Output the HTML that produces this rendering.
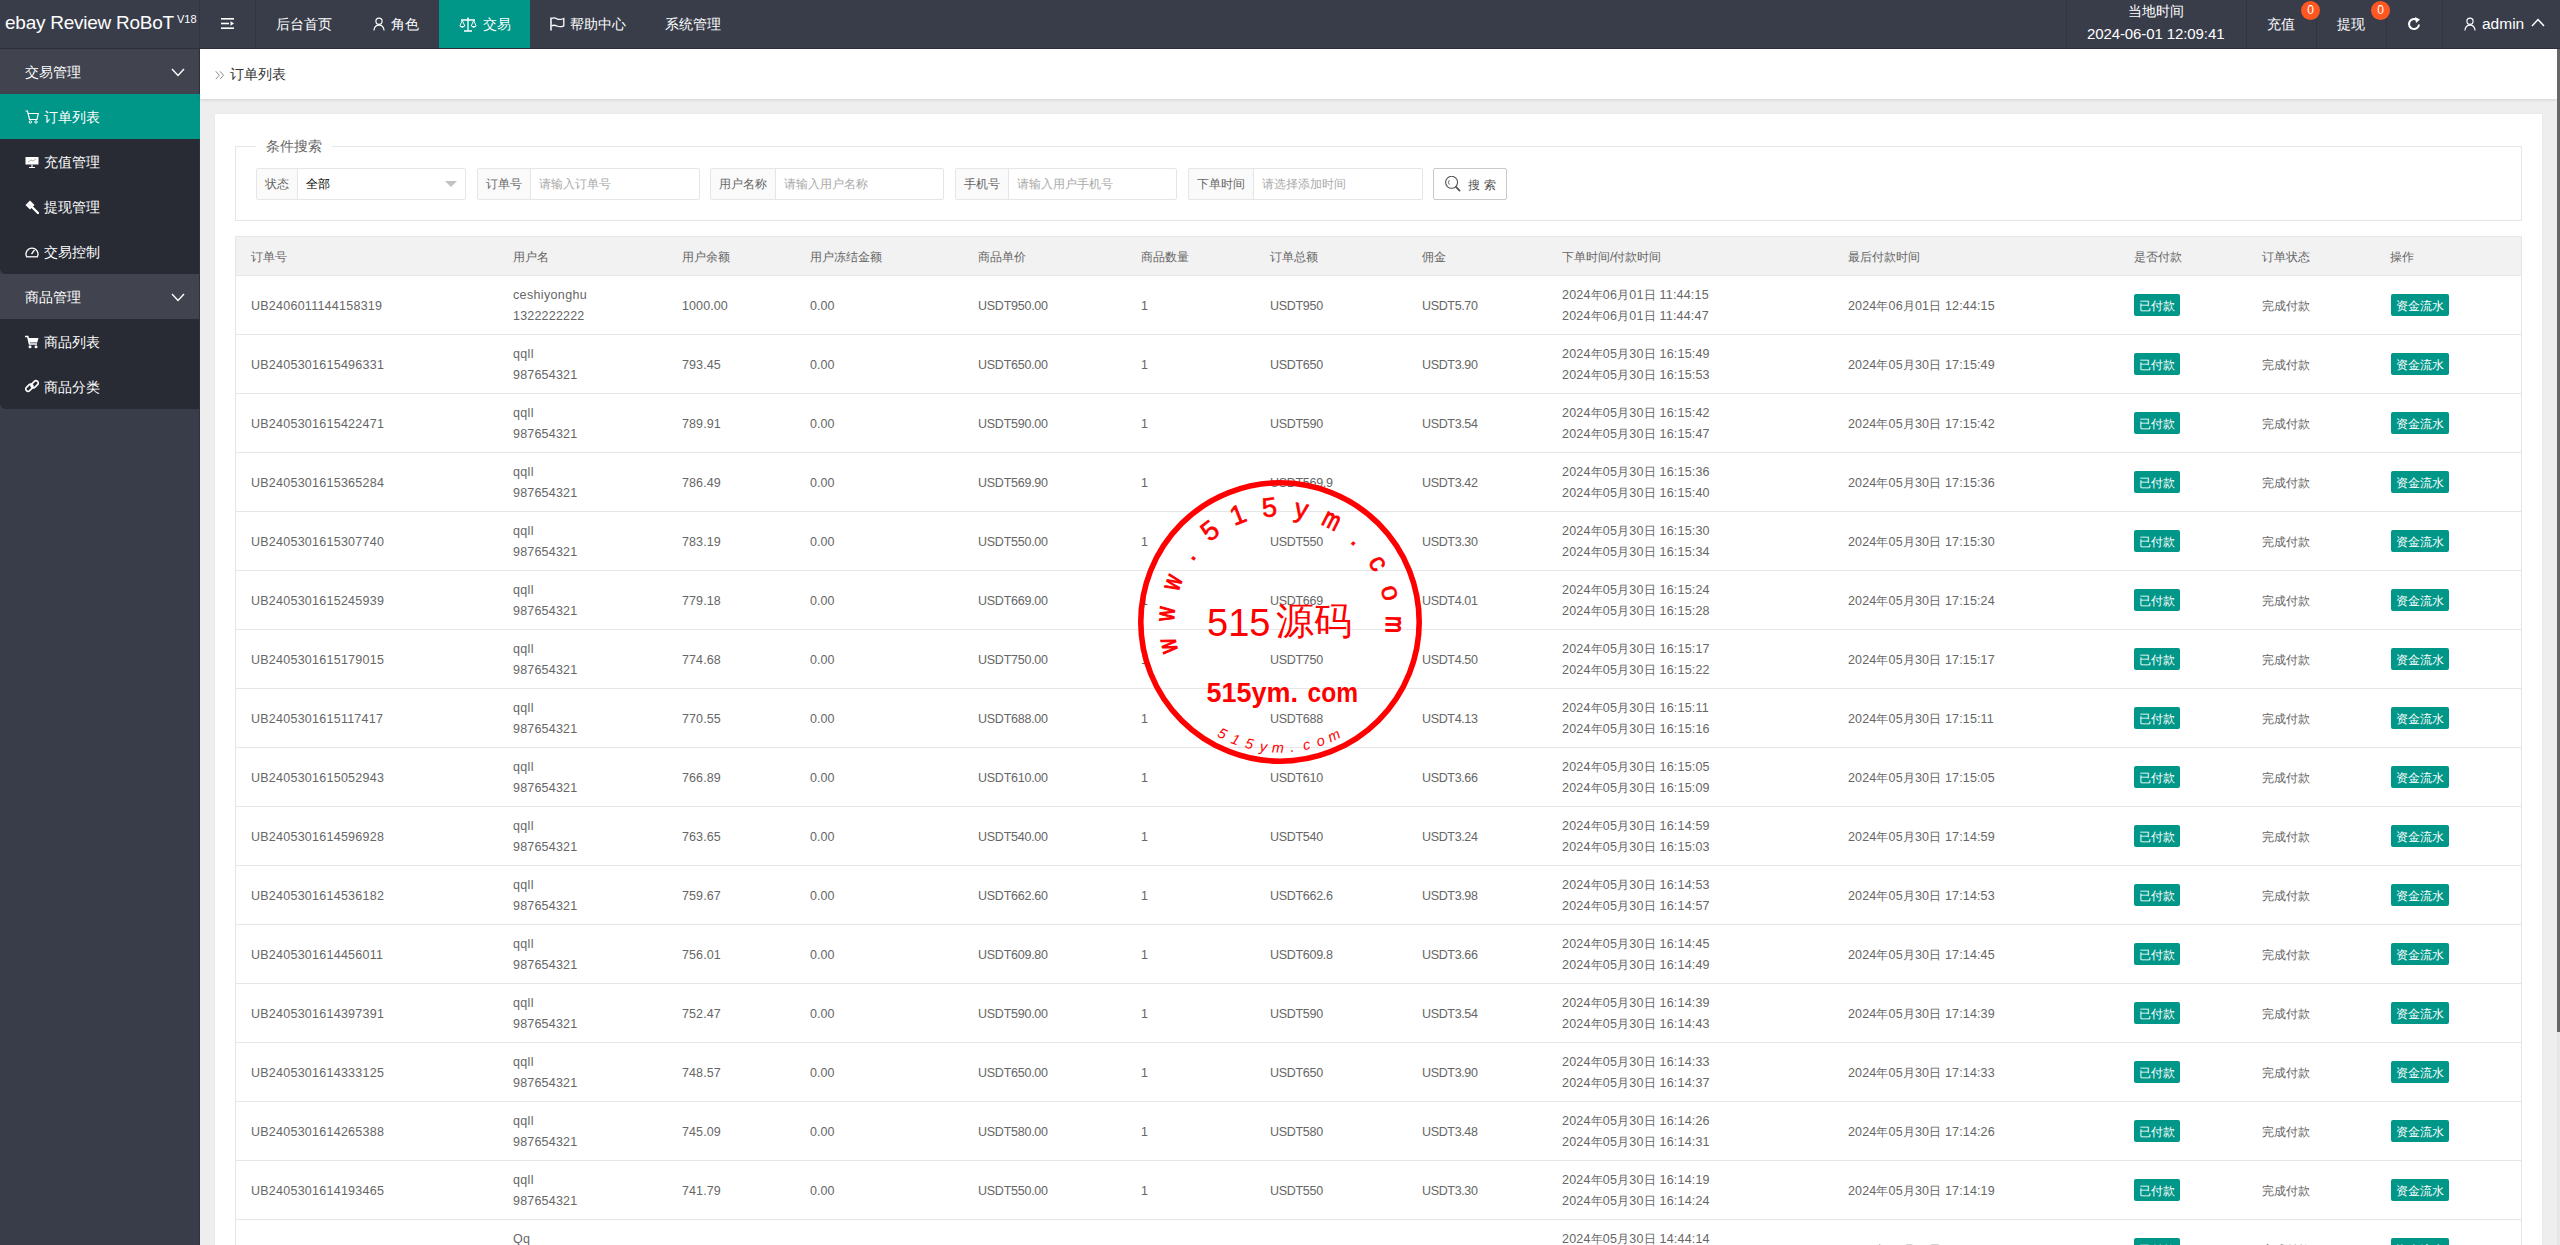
<!DOCTYPE html>
<html><head><meta charset="utf-8"><title>订单列表</title>
<style>
*{box-sizing:border-box}
html,body{margin:0;padding:0}
body{width:2560px;height:1245px;overflow:hidden;position:relative;background:#eeeeee;font-family:"Liberation Sans",sans-serif;color:#666;font-size:13px}
.hdr{position:absolute;left:0;top:0;width:2560px;height:49px;background:#393d4a;border-bottom:1px solid #2c2f3a}
.hdr .t{position:absolute;color:#fff;font-size:14px;line-height:20px;white-space:nowrap}
.vl{position:absolute;top:0;width:1px;height:48px;background:#32353f}
.logo{position:absolute;left:5px;top:10px;color:#fff;font-size:19px;line-height:26px;white-space:nowrap;letter-spacing:-0.25px}
.logo sup{font-size:11px;position:absolute;left:172px;top:4px;line-height:11px;letter-spacing:0}
.act{position:absolute;left:439px;top:0;width:91px;height:48px;background:#009688}
.badge{position:absolute;top:1px;width:19px;height:19px;border-radius:50%;background:#ff5722;color:#fff;font-size:12px;line-height:19px;text-align:center}
.side{position:absolute;left:0;top:49px;width:199px;height:1196px;background:#393d4a}
.sideline{position:absolute;left:199px;top:49px;width:1px;height:1196px;background:#30333d}
.si{position:absolute;left:0;width:199px;height:45px;color:#fff;font-size:14px;line-height:45px;white-space:nowrap}
.si .tx{position:absolute;left:44px;top:1px}
.si .ic{position:absolute;left:25px;top:16px;width:14px;height:14px}
.pi{background:#41444f}
.grp{position:absolute;left:0;width:199px;background:#282b34;border-radius:0 0 0 6px}
.si.on{background:#009688;width:200px}
.chev{position:absolute;left:172px;top:18px}
.crumb{position:absolute;left:200px;top:49px;width:2357px;height:50px;background:#fff;box-shadow:0 1px 3px rgba(0,0,0,.12)}
.crumb .t{position:absolute;left:230px;top:15px;font-size:14px;color:#333;line-height:20px}
.scroll{position:absolute;left:2557px;top:49px;width:3px;height:1196px;background:#e6e6e6}
.thumb{position:absolute;left:2557px;top:49px;width:3px;height:983px;background:#666}
.card{position:absolute;left:215px;top:114px;width:2327px;height:1200px;background:#fff;box-shadow:0 0 2px rgba(0,0,0,.06)}
.fs{position:absolute;left:235px;top:146px;width:2287px;height:75px;border:1px solid #e6e6e6}
.legend{position:absolute;left:256px;top:136px;padding:0 10px;background:#fff;font-size:14px;color:#666;line-height:20px}
.ig{position:absolute;top:168px;height:32px;border:1px solid #e6e6e6;border-radius:2px;background:#fff}
.ig .lb{position:absolute;left:0;top:0;height:30px;background:#fafafa;border-right:1px solid #e6e6e6;color:#666;font-size:12px;line-height:30px;text-align:center}
.ig .ph{position:absolute;top:0;line-height:30px;font-size:12px;color:#aaa;white-space:nowrap}
.btn{position:absolute;left:1433px;top:168px;width:74px;height:32px;border:1px solid #c9c9c9;border-radius:2px;background:#fff;color:#555;font-size:12px;line-height:30px}
.tbl{position:absolute;left:235px;top:236px;width:2287px;height:1100px;border:1px solid #e6e6e6;border-bottom:none}
.th{position:absolute;left:236px;top:237px;width:2285px;height:39px;background:#f2f2f2;border-bottom:1px solid #e6e6e6}
.c{position:absolute;font-size:12.5px;line-height:20px;color:#666;white-space:nowrap}
.rl{position:absolute;left:236px;width:2285px;height:1px;background:#e6e6e6}
.bx{position:absolute;height:22px;background:#009688;color:#fff;font-size:12px;line-height:24px;overflow:hidden;text-align:center;border-radius:2px}
.c b{font-weight:normal;font-size:12px}
</style></head><body>

<div class="hdr"></div>
<div class="logo">ebay Review RoBoT<sup>V18</sup></div>
<div class="vl" style="left:199px"></div>
<div class="vl" style="left:255px"></div>
<div class="vl" style="left:2066px"></div>
<div class="vl" style="left:2246px"></div>
<div class="vl" style="left:2316px"></div>
<div class="vl" style="left:2386px"></div>
<div class="vl" style="left:2442px"></div>
<div class="act"></div>
<svg style="position:absolute;left:221px;top:17px" width="14" height="13" viewBox="0 0 14 13"><rect x="0" y="1" width="13" height="1.6" fill="#fff"/><rect x="0" y="5.7" width="8" height="1.6" fill="#fff"/><path d="M9.5 4.3 L13 6.5 L9.5 8.7Z" fill="#fff"/><rect x="0" y="10.4" width="13" height="1.6" fill="#fff"/></svg>
<div class="hdr-items">
<div class="t" style="position:absolute;left:276px;top:14px;color:#fff;font-size:14px;line-height:20px">后台首页</div>
<svg style="position:absolute;left:373px;top:17px" width="12" height="14" viewBox="0 0 12 14"><circle cx="6" cy="4.2" r="3.1" fill="none" stroke="#fff" stroke-width="1.15"/><path d="M0.9 13.5 C1.3 9.7 3.5 8.1 6 8.1 C8.5 8.1 10.7 9.7 11.1 13.5" fill="none" stroke="#fff" stroke-width="1.15"/></svg>
<div style="position:absolute;left:391px;top:14px;color:#fff;font-size:14px;line-height:20px">角色</div>
<svg style="position:absolute;left:459px;top:17px" width="18" height="15" viewBox="0 0 18 15"><path d="M9 1 V14 M5 14 H13 M2 3 H16" stroke="#fff" stroke-width="1.3" fill="none"/><circle cx="9" cy="1.5" r="1" fill="#fff"/><path d="M3.3 3.5 L0.8 9 M3.3 3.5 L5.8 9 M14.7 3.5 L12.2 9 M14.7 3.5 L17.2 9" stroke="#fff" stroke-width="1" fill="none"/><path d="M0.5 9 Q3.3 12.5 6.1 9Z M11.9 9 Q14.7 12.5 17.5 9Z" fill="#fff"/></svg>
<div style="position:absolute;left:483px;top:14px;color:#fff;font-size:14px;line-height:20px">交易</div>
<svg style="position:absolute;left:550px;top:17px" width="15" height="14" viewBox="0 0 15 14"><path d="M1 0.5 V13.5" stroke="#fff" stroke-width="1.5"/><path d="M1.5 1.5 Q4 0.3 7 1.8 Q10 3.2 13.8 1.5 V8.8 Q10 10.5 7 9 Q4 7.6 1.5 8.8" fill="none" stroke="#fff" stroke-width="1.3"/></svg>
<div style="position:absolute;left:570px;top:14px;color:#fff;font-size:14px;line-height:20px">帮助中心</div>
<div style="position:absolute;left:665px;top:14px;color:#fff;font-size:14px;line-height:20px">系统管理</div>
</div>
<div style="position:absolute;left:2128px;top:1px;color:#fff;font-size:14px;line-height:20px">当地时间</div>
<div style="position:absolute;left:2087px;top:24px;color:#fff;font-size:15px;line-height:20px;white-space:nowrap;letter-spacing:-0.1px">2024-06-01 12:09:41</div>
<div style="position:absolute;left:2267px;top:14px;color:#fff;font-size:14px;line-height:20px">充值</div>
<div class="badge" style="left:2301px">0</div>
<div style="position:absolute;left:2337px;top:14px;color:#fff;font-size:14px;line-height:20px">提现</div>
<div class="badge" style="left:2371px">0</div>
<svg style="position:absolute;left:2407px;top:17px" width="14" height="14" viewBox="0 0 14 14"><path d="M12 7.5 A5 5 0 1 1 9.8 2.9" fill="none" stroke="#fff" stroke-width="2"/><path d="M8 0 L13 2.5 L9 6Z" fill="#fff"/></svg>
<svg style="position:absolute;left:2464px;top:17px" width="12" height="14" viewBox="0 0 12 14"><circle cx="6" cy="4.2" r="3.1" fill="none" stroke="#fff" stroke-width="1.15"/><path d="M0.9 13.5 C1.3 9.7 3.5 8.1 6 8.1 C8.5 8.1 10.7 9.7 11.1 13.5" fill="none" stroke="#fff" stroke-width="1.15"/></svg>
<div style="position:absolute;left:2482px;top:14px;color:#fff;font-size:15.5px;line-height:20px">admin</div>
<svg style="position:absolute;left:2531px;top:18px" width="14" height="9" viewBox="0 0 14 9"><path d="M1 8 L7 1.5 L13 8" fill="none" stroke="#fff" stroke-width="1.5"/></svg>
<div class="side"></div><div class="sideline"></div>
<div class="si pi" style="top:49px"><div class="tx" style="left:25px">交易管理</div></div><svg style="position:absolute;left:171px;top:68px" width="14" height="9" viewBox="0 0 14 9"><path d="M1 1 L7 7.5 L13 1" fill="none" stroke="#fff" stroke-width="1.4"/></svg>
<div class="grp" style="top:94px;height:180px"></div>
<div class="si on" style="top:94px"><div class="tx">订单列表</div></div>
<svg style="position:absolute;left:25px;top:110px" width="14" height="14" viewBox="0 0 14 14"><path d="M0.5 1 H2.5 L4.5 9.5 H12 L13.3 3.5 H3.3" fill="none" stroke="#fff" stroke-width="1.2"/><circle cx="5.3" cy="12" r="1.2" fill="none" stroke="#fff" stroke-width="1"/><circle cx="11" cy="12" r="1.2" fill="none" stroke="#fff" stroke-width="1"/></svg>
<div class="si" style="top:139px"><div class="tx">充值管理</div></div>
<svg style="position:absolute;left:25px;top:156px" width="14" height="12" viewBox="0 0 14 12"><rect x="0.5" y="1" width="13" height="7.5" fill="#fff"/><path d="M7 8.5 V11 M4 11.5 H10" stroke="#fff" stroke-width="1.2"/><path d="M3 6 L6 4 L8 5 L11 3" stroke="#999" stroke-width="0.8" fill="none"/></svg>
<div class="si" style="top:184px"><div class="tx">提现管理</div></div>
<svg style="position:absolute;left:25px;top:200px" width="14" height="14" viewBox="0 0 14 14"><path d="M5 0.5 L9.5 5 L7 7.5 L2.5 3Z" fill="#fff"/><path d="M0.5 5 L2.5 3 L7 7.5 L5 9.5Z" fill="#fff"/><path d="M7 7 L13 13" stroke="#fff" stroke-width="2.4" stroke-linecap="round"/></svg>
<div class="si" style="top:229px"><div class="tx">交易控制</div></div>
<svg style="position:absolute;left:25px;top:245px" width="14" height="13" viewBox="0 0 14 13"><path d="M1.5 11.5 A6 6 0 1 1 12.5 11.5" fill="none" stroke="#fff" stroke-width="1.3"/><path d="M1 11.8 H13" stroke="#fff" stroke-width="1.3"/><path d="M6.5 9 L9.5 5" stroke="#fff" stroke-width="1.3"/></svg>
<div class="si pi" style="top:274px"><div class="tx" style="left:25px">商品管理</div></div><svg style="position:absolute;left:171px;top:293px" width="14" height="9" viewBox="0 0 14 9"><path d="M1 1 L7 7.5 L13 1" fill="none" stroke="#fff" stroke-width="1.4"/></svg>
<div class="grp" style="top:319px;height:90px"></div>
<div class="si" style="top:319px"><div class="tx">商品列表</div></div>
<svg style="position:absolute;left:25px;top:335px" width="14" height="14" viewBox="0 0 14 14"><path d="M0 1.5 H2.8 L4.5 9 H12" fill="none" stroke="#fff" stroke-width="1.6"/><path d="M3.3 3 H13.5 L12.3 7.5 H4.3Z" fill="#fff"/><circle cx="5" cy="11.8" r="1.5" fill="#fff"/><circle cx="11" cy="11.8" r="1.5" fill="#fff"/></svg>
<div class="si" style="top:364px"><div class="tx">商品分类</div></div>
<svg style="position:absolute;left:25px;top:379px" width="14" height="14" viewBox="0 0 14 14"><path d="M6 8 L8 6" stroke="#fff" stroke-width="1.6"/><rect x="0.3" y="6.5" width="8" height="4.5" rx="2.25" transform="rotate(-45 4.3 8.75)" fill="none" stroke="#fff" stroke-width="1.6"/><rect x="5.7" y="3" width="8" height="4.5" rx="2.25" transform="rotate(-45 9.7 5.25)" fill="none" stroke="#fff" stroke-width="1.6"/></svg>
<div class="crumb"></div>
<svg style="position:absolute;left:215px;top:70px" width="11" height="11" viewBox="0 0 11 11"><path d="M0.8 1.3 L4.3 5.2 L0.8 9.1 M5 1.3 L8.5 5.2 L5 9.1" fill="none" stroke="#8a8a8a" stroke-width="1"/></svg>
<div style="position:absolute;left:230px;top:64px;font-size:14px;line-height:20px;color:#333">订单列表</div>
<div class="scroll"></div><div class="thumb"></div>
<div class="card"></div>
<div class="fs"></div><div class="legend">条件搜索</div>
<div class="ig" style="left:256px;width:210px"><div class="lb" style="width:41px">状态</div><div class="ph" style="left:49px;color:#000">全部</div></div>
<svg style="position:absolute;left:445px;top:181px" width="12" height="7" viewBox="0 0 12 7"><path d="M0 0 H12 L6 6Z" fill="#c2c2c2"/></svg>
<div class="ig" style="left:477px;width:223px"><div class="lb" style="width:53px">订单号</div><div class="ph" style="left:61px;color:#aaa">请输入订单号</div></div>
<div class="ig" style="left:710px;width:234px"><div class="lb" style="width:65px">用户名称</div><div class="ph" style="left:73px;color:#aaa">请输入用户名称</div></div>
<div class="ig" style="left:955px;width:222px"><div class="lb" style="width:53px">手机号</div><div class="ph" style="left:61px;color:#aaa">请输入用户手机号</div></div>
<div class="ig" style="left:1188px;width:235px"><div class="lb" style="width:65px">下单时间</div><div class="ph" style="left:73px;color:#aaa">请选择添加时间</div></div>
<div class="btn"></div>
<svg style="position:absolute;left:1445px;top:176px" width="18" height="18" viewBox="0 0 18 18"><circle cx="6.6" cy="6.3" r="6" fill="none" stroke="#555" stroke-width="1.1"/><path d="M11 10.8 L14.6 14.6" stroke="#555" stroke-width="1.8" stroke-linecap="round"/><path d="M4.3 4.2 A3.6 3.6 0 0 0 4.3 8.6" fill="none" stroke="#555" stroke-width="0.9"/></svg>
<div style="position:absolute;left:1468px;top:175px;font-size:12px;line-height:20px;color:#555;letter-spacing:4px">搜索</div>
<div class="tbl"></div><div class="th"></div>
<div class="c" style="left:251px;top:247px"><b>订单号</b></div>
<div class="c" style="left:513px;top:247px"><b>用户名</b></div>
<div class="c" style="left:682px;top:247px"><b>用户余额</b></div>
<div class="c" style="left:810px;top:247px"><b>用户冻结金额</b></div>
<div class="c" style="left:978px;top:247px"><b>商品单价</b></div>
<div class="c" style="left:1141px;top:247px"><b>商品数量</b></div>
<div class="c" style="left:1270px;top:247px"><b>订单总额</b></div>
<div class="c" style="left:1422px;top:247px"><b>佣金</b></div>
<div class="c" style="left:1562px;top:247px"><b>下单时间</b>/<b>付款时间</b></div>
<div class="c" style="left:1848px;top:247px"><b>最后付款时间</b></div>
<div class="c" style="left:2134px;top:247px"><b>是否付款</b></div>
<div class="c" style="left:2262px;top:247px"><b>订单状态</b></div>
<div class="c" style="left:2390px;top:247px"><b>操作</b></div>
<div class="rl" style="top:334px"></div>
<div class="c" style="left:251px;top:296px;letter-spacing:.25px">UB2406011144158319</div>
<div class="c" style="left:513px;top:285px;letter-spacing:.35px">ceshiyonghu</div><div class="c" style="left:513px;top:306px;letter-spacing:.2px">1322222222</div>
<div class="c" style="left:682px;top:296px;letter-spacing:.1px">1000.00</div>
<div class="c" style="left:810px;top:296px;letter-spacing:0px">0.00</div>
<div class="c" style="left:978px;top:296px;letter-spacing:-.25px">USDT950.00</div>
<div class="c" style="left:1141px;top:296px">1</div>
<div class="c" style="left:1270px;top:296px;letter-spacing:-.3px">USDT950</div>
<div class="c" style="left:1422px;top:296px;letter-spacing:-.35px">USDT5.70</div>
<div class="c" style="left:1562px;top:285px;letter-spacing:.2px">2024<b>年</b>06<b>月</b>01<b>日</b> 11:44:15</div><div class="c" style="left:1562px;top:306px;letter-spacing:.2px">2024<b>年</b>06<b>月</b>01<b>日</b> 11:44:47</div>
<div class="c" style="left:1848px;top:296px;letter-spacing:.15px">2024<b>年</b>06<b>月</b>01<b>日</b> 12:44:15</div>
<div class="bx" style="left:2134px;top:294px;width:46px">已付款</div>
<div class="c" style="left:2262px;top:296px"><b>完成付款</b></div>
<div class="bx" style="left:2391px;top:294px;width:58px">资金流水</div>
<div class="rl" style="top:393px"></div>
<div class="c" style="left:251px;top:355px;letter-spacing:.25px">UB2405301615496331</div>
<div class="c" style="left:513px;top:344px;letter-spacing:.35px">qqll</div><div class="c" style="left:513px;top:365px;letter-spacing:.2px">987654321</div>
<div class="c" style="left:682px;top:355px;letter-spacing:.1px">793.45</div>
<div class="c" style="left:810px;top:355px;letter-spacing:0px">0.00</div>
<div class="c" style="left:978px;top:355px;letter-spacing:-.25px">USDT650.00</div>
<div class="c" style="left:1141px;top:355px">1</div>
<div class="c" style="left:1270px;top:355px;letter-spacing:-.3px">USDT650</div>
<div class="c" style="left:1422px;top:355px;letter-spacing:-.35px">USDT3.90</div>
<div class="c" style="left:1562px;top:344px;letter-spacing:.2px">2024<b>年</b>05<b>月</b>30<b>日</b> 16:15:49</div><div class="c" style="left:1562px;top:365px;letter-spacing:.2px">2024<b>年</b>05<b>月</b>30<b>日</b> 16:15:53</div>
<div class="c" style="left:1848px;top:355px;letter-spacing:.15px">2024<b>年</b>05<b>月</b>30<b>日</b> 17:15:49</div>
<div class="bx" style="left:2134px;top:353px;width:46px">已付款</div>
<div class="c" style="left:2262px;top:355px"><b>完成付款</b></div>
<div class="bx" style="left:2391px;top:353px;width:58px">资金流水</div>
<div class="rl" style="top:452px"></div>
<div class="c" style="left:251px;top:414px;letter-spacing:.25px">UB2405301615422471</div>
<div class="c" style="left:513px;top:403px;letter-spacing:.35px">qqll</div><div class="c" style="left:513px;top:424px;letter-spacing:.2px">987654321</div>
<div class="c" style="left:682px;top:414px;letter-spacing:.1px">789.91</div>
<div class="c" style="left:810px;top:414px;letter-spacing:0px">0.00</div>
<div class="c" style="left:978px;top:414px;letter-spacing:-.25px">USDT590.00</div>
<div class="c" style="left:1141px;top:414px">1</div>
<div class="c" style="left:1270px;top:414px;letter-spacing:-.3px">USDT590</div>
<div class="c" style="left:1422px;top:414px;letter-spacing:-.35px">USDT3.54</div>
<div class="c" style="left:1562px;top:403px;letter-spacing:.2px">2024<b>年</b>05<b>月</b>30<b>日</b> 16:15:42</div><div class="c" style="left:1562px;top:424px;letter-spacing:.2px">2024<b>年</b>05<b>月</b>30<b>日</b> 16:15:47</div>
<div class="c" style="left:1848px;top:414px;letter-spacing:.15px">2024<b>年</b>05<b>月</b>30<b>日</b> 17:15:42</div>
<div class="bx" style="left:2134px;top:412px;width:46px">已付款</div>
<div class="c" style="left:2262px;top:414px"><b>完成付款</b></div>
<div class="bx" style="left:2391px;top:412px;width:58px">资金流水</div>
<div class="rl" style="top:511px"></div>
<div class="c" style="left:251px;top:473px;letter-spacing:.25px">UB2405301615365284</div>
<div class="c" style="left:513px;top:462px;letter-spacing:.35px">qqll</div><div class="c" style="left:513px;top:483px;letter-spacing:.2px">987654321</div>
<div class="c" style="left:682px;top:473px;letter-spacing:.1px">786.49</div>
<div class="c" style="left:810px;top:473px;letter-spacing:0px">0.00</div>
<div class="c" style="left:978px;top:473px;letter-spacing:-.25px">USDT569.90</div>
<div class="c" style="left:1141px;top:473px">1</div>
<div class="c" style="left:1270px;top:473px;letter-spacing:-.3px">USDT569.9</div>
<div class="c" style="left:1422px;top:473px;letter-spacing:-.35px">USDT3.42</div>
<div class="c" style="left:1562px;top:462px;letter-spacing:.2px">2024<b>年</b>05<b>月</b>30<b>日</b> 16:15:36</div><div class="c" style="left:1562px;top:483px;letter-spacing:.2px">2024<b>年</b>05<b>月</b>30<b>日</b> 16:15:40</div>
<div class="c" style="left:1848px;top:473px;letter-spacing:.15px">2024<b>年</b>05<b>月</b>30<b>日</b> 17:15:36</div>
<div class="bx" style="left:2134px;top:471px;width:46px">已付款</div>
<div class="c" style="left:2262px;top:473px"><b>完成付款</b></div>
<div class="bx" style="left:2391px;top:471px;width:58px">资金流水</div>
<div class="rl" style="top:570px"></div>
<div class="c" style="left:251px;top:532px;letter-spacing:.25px">UB2405301615307740</div>
<div class="c" style="left:513px;top:521px;letter-spacing:.35px">qqll</div><div class="c" style="left:513px;top:542px;letter-spacing:.2px">987654321</div>
<div class="c" style="left:682px;top:532px;letter-spacing:.1px">783.19</div>
<div class="c" style="left:810px;top:532px;letter-spacing:0px">0.00</div>
<div class="c" style="left:978px;top:532px;letter-spacing:-.25px">USDT550.00</div>
<div class="c" style="left:1141px;top:532px">1</div>
<div class="c" style="left:1270px;top:532px;letter-spacing:-.3px">USDT550</div>
<div class="c" style="left:1422px;top:532px;letter-spacing:-.35px">USDT3.30</div>
<div class="c" style="left:1562px;top:521px;letter-spacing:.2px">2024<b>年</b>05<b>月</b>30<b>日</b> 16:15:30</div><div class="c" style="left:1562px;top:542px;letter-spacing:.2px">2024<b>年</b>05<b>月</b>30<b>日</b> 16:15:34</div>
<div class="c" style="left:1848px;top:532px;letter-spacing:.15px">2024<b>年</b>05<b>月</b>30<b>日</b> 17:15:30</div>
<div class="bx" style="left:2134px;top:530px;width:46px">已付款</div>
<div class="c" style="left:2262px;top:532px"><b>完成付款</b></div>
<div class="bx" style="left:2391px;top:530px;width:58px">资金流水</div>
<div class="rl" style="top:629px"></div>
<div class="c" style="left:251px;top:591px;letter-spacing:.25px">UB2405301615245939</div>
<div class="c" style="left:513px;top:580px;letter-spacing:.35px">qqll</div><div class="c" style="left:513px;top:601px;letter-spacing:.2px">987654321</div>
<div class="c" style="left:682px;top:591px;letter-spacing:.1px">779.18</div>
<div class="c" style="left:810px;top:591px;letter-spacing:0px">0.00</div>
<div class="c" style="left:978px;top:591px;letter-spacing:-.25px">USDT669.00</div>
<div class="c" style="left:1141px;top:591px">1</div>
<div class="c" style="left:1270px;top:591px;letter-spacing:-.3px">USDT669</div>
<div class="c" style="left:1422px;top:591px;letter-spacing:-.35px">USDT4.01</div>
<div class="c" style="left:1562px;top:580px;letter-spacing:.2px">2024<b>年</b>05<b>月</b>30<b>日</b> 16:15:24</div><div class="c" style="left:1562px;top:601px;letter-spacing:.2px">2024<b>年</b>05<b>月</b>30<b>日</b> 16:15:28</div>
<div class="c" style="left:1848px;top:591px;letter-spacing:.15px">2024<b>年</b>05<b>月</b>30<b>日</b> 17:15:24</div>
<div class="bx" style="left:2134px;top:589px;width:46px">已付款</div>
<div class="c" style="left:2262px;top:591px"><b>完成付款</b></div>
<div class="bx" style="left:2391px;top:589px;width:58px">资金流水</div>
<div class="rl" style="top:688px"></div>
<div class="c" style="left:251px;top:650px;letter-spacing:.25px">UB2405301615179015</div>
<div class="c" style="left:513px;top:639px;letter-spacing:.35px">qqll</div><div class="c" style="left:513px;top:660px;letter-spacing:.2px">987654321</div>
<div class="c" style="left:682px;top:650px;letter-spacing:.1px">774.68</div>
<div class="c" style="left:810px;top:650px;letter-spacing:0px">0.00</div>
<div class="c" style="left:978px;top:650px;letter-spacing:-.25px">USDT750.00</div>
<div class="c" style="left:1141px;top:650px">1</div>
<div class="c" style="left:1270px;top:650px;letter-spacing:-.3px">USDT750</div>
<div class="c" style="left:1422px;top:650px;letter-spacing:-.35px">USDT4.50</div>
<div class="c" style="left:1562px;top:639px;letter-spacing:.2px">2024<b>年</b>05<b>月</b>30<b>日</b> 16:15:17</div><div class="c" style="left:1562px;top:660px;letter-spacing:.2px">2024<b>年</b>05<b>月</b>30<b>日</b> 16:15:22</div>
<div class="c" style="left:1848px;top:650px;letter-spacing:.15px">2024<b>年</b>05<b>月</b>30<b>日</b> 17:15:17</div>
<div class="bx" style="left:2134px;top:648px;width:46px">已付款</div>
<div class="c" style="left:2262px;top:650px"><b>完成付款</b></div>
<div class="bx" style="left:2391px;top:648px;width:58px">资金流水</div>
<div class="rl" style="top:747px"></div>
<div class="c" style="left:251px;top:709px;letter-spacing:.25px">UB2405301615117417</div>
<div class="c" style="left:513px;top:698px;letter-spacing:.35px">qqll</div><div class="c" style="left:513px;top:719px;letter-spacing:.2px">987654321</div>
<div class="c" style="left:682px;top:709px;letter-spacing:.1px">770.55</div>
<div class="c" style="left:810px;top:709px;letter-spacing:0px">0.00</div>
<div class="c" style="left:978px;top:709px;letter-spacing:-.25px">USDT688.00</div>
<div class="c" style="left:1141px;top:709px">1</div>
<div class="c" style="left:1270px;top:709px;letter-spacing:-.3px">USDT688</div>
<div class="c" style="left:1422px;top:709px;letter-spacing:-.35px">USDT4.13</div>
<div class="c" style="left:1562px;top:698px;letter-spacing:.2px">2024<b>年</b>05<b>月</b>30<b>日</b> 16:15:11</div><div class="c" style="left:1562px;top:719px;letter-spacing:.2px">2024<b>年</b>05<b>月</b>30<b>日</b> 16:15:16</div>
<div class="c" style="left:1848px;top:709px;letter-spacing:.15px">2024<b>年</b>05<b>月</b>30<b>日</b> 17:15:11</div>
<div class="bx" style="left:2134px;top:707px;width:46px">已付款</div>
<div class="c" style="left:2262px;top:709px"><b>完成付款</b></div>
<div class="bx" style="left:2391px;top:707px;width:58px">资金流水</div>
<div class="rl" style="top:806px"></div>
<div class="c" style="left:251px;top:768px;letter-spacing:.25px">UB2405301615052943</div>
<div class="c" style="left:513px;top:757px;letter-spacing:.35px">qqll</div><div class="c" style="left:513px;top:778px;letter-spacing:.2px">987654321</div>
<div class="c" style="left:682px;top:768px;letter-spacing:.1px">766.89</div>
<div class="c" style="left:810px;top:768px;letter-spacing:0px">0.00</div>
<div class="c" style="left:978px;top:768px;letter-spacing:-.25px">USDT610.00</div>
<div class="c" style="left:1141px;top:768px">1</div>
<div class="c" style="left:1270px;top:768px;letter-spacing:-.3px">USDT610</div>
<div class="c" style="left:1422px;top:768px;letter-spacing:-.35px">USDT3.66</div>
<div class="c" style="left:1562px;top:757px;letter-spacing:.2px">2024<b>年</b>05<b>月</b>30<b>日</b> 16:15:05</div><div class="c" style="left:1562px;top:778px;letter-spacing:.2px">2024<b>年</b>05<b>月</b>30<b>日</b> 16:15:09</div>
<div class="c" style="left:1848px;top:768px;letter-spacing:.15px">2024<b>年</b>05<b>月</b>30<b>日</b> 17:15:05</div>
<div class="bx" style="left:2134px;top:766px;width:46px">已付款</div>
<div class="c" style="left:2262px;top:768px"><b>完成付款</b></div>
<div class="bx" style="left:2391px;top:766px;width:58px">资金流水</div>
<div class="rl" style="top:865px"></div>
<div class="c" style="left:251px;top:827px;letter-spacing:.25px">UB2405301614596928</div>
<div class="c" style="left:513px;top:816px;letter-spacing:.35px">qqll</div><div class="c" style="left:513px;top:837px;letter-spacing:.2px">987654321</div>
<div class="c" style="left:682px;top:827px;letter-spacing:.1px">763.65</div>
<div class="c" style="left:810px;top:827px;letter-spacing:0px">0.00</div>
<div class="c" style="left:978px;top:827px;letter-spacing:-.25px">USDT540.00</div>
<div class="c" style="left:1141px;top:827px">1</div>
<div class="c" style="left:1270px;top:827px;letter-spacing:-.3px">USDT540</div>
<div class="c" style="left:1422px;top:827px;letter-spacing:-.35px">USDT3.24</div>
<div class="c" style="left:1562px;top:816px;letter-spacing:.2px">2024<b>年</b>05<b>月</b>30<b>日</b> 16:14:59</div><div class="c" style="left:1562px;top:837px;letter-spacing:.2px">2024<b>年</b>05<b>月</b>30<b>日</b> 16:15:03</div>
<div class="c" style="left:1848px;top:827px;letter-spacing:.15px">2024<b>年</b>05<b>月</b>30<b>日</b> 17:14:59</div>
<div class="bx" style="left:2134px;top:825px;width:46px">已付款</div>
<div class="c" style="left:2262px;top:827px"><b>完成付款</b></div>
<div class="bx" style="left:2391px;top:825px;width:58px">资金流水</div>
<div class="rl" style="top:924px"></div>
<div class="c" style="left:251px;top:886px;letter-spacing:.25px">UB2405301614536182</div>
<div class="c" style="left:513px;top:875px;letter-spacing:.35px">qqll</div><div class="c" style="left:513px;top:896px;letter-spacing:.2px">987654321</div>
<div class="c" style="left:682px;top:886px;letter-spacing:.1px">759.67</div>
<div class="c" style="left:810px;top:886px;letter-spacing:0px">0.00</div>
<div class="c" style="left:978px;top:886px;letter-spacing:-.25px">USDT662.60</div>
<div class="c" style="left:1141px;top:886px">1</div>
<div class="c" style="left:1270px;top:886px;letter-spacing:-.3px">USDT662.6</div>
<div class="c" style="left:1422px;top:886px;letter-spacing:-.35px">USDT3.98</div>
<div class="c" style="left:1562px;top:875px;letter-spacing:.2px">2024<b>年</b>05<b>月</b>30<b>日</b> 16:14:53</div><div class="c" style="left:1562px;top:896px;letter-spacing:.2px">2024<b>年</b>05<b>月</b>30<b>日</b> 16:14:57</div>
<div class="c" style="left:1848px;top:886px;letter-spacing:.15px">2024<b>年</b>05<b>月</b>30<b>日</b> 17:14:53</div>
<div class="bx" style="left:2134px;top:884px;width:46px">已付款</div>
<div class="c" style="left:2262px;top:886px"><b>完成付款</b></div>
<div class="bx" style="left:2391px;top:884px;width:58px">资金流水</div>
<div class="rl" style="top:983px"></div>
<div class="c" style="left:251px;top:945px;letter-spacing:.25px">UB2405301614456011</div>
<div class="c" style="left:513px;top:934px;letter-spacing:.35px">qqll</div><div class="c" style="left:513px;top:955px;letter-spacing:.2px">987654321</div>
<div class="c" style="left:682px;top:945px;letter-spacing:.1px">756.01</div>
<div class="c" style="left:810px;top:945px;letter-spacing:0px">0.00</div>
<div class="c" style="left:978px;top:945px;letter-spacing:-.25px">USDT609.80</div>
<div class="c" style="left:1141px;top:945px">1</div>
<div class="c" style="left:1270px;top:945px;letter-spacing:-.3px">USDT609.8</div>
<div class="c" style="left:1422px;top:945px;letter-spacing:-.35px">USDT3.66</div>
<div class="c" style="left:1562px;top:934px;letter-spacing:.2px">2024<b>年</b>05<b>月</b>30<b>日</b> 16:14:45</div><div class="c" style="left:1562px;top:955px;letter-spacing:.2px">2024<b>年</b>05<b>月</b>30<b>日</b> 16:14:49</div>
<div class="c" style="left:1848px;top:945px;letter-spacing:.15px">2024<b>年</b>05<b>月</b>30<b>日</b> 17:14:45</div>
<div class="bx" style="left:2134px;top:943px;width:46px">已付款</div>
<div class="c" style="left:2262px;top:945px"><b>完成付款</b></div>
<div class="bx" style="left:2391px;top:943px;width:58px">资金流水</div>
<div class="rl" style="top:1042px"></div>
<div class="c" style="left:251px;top:1004px;letter-spacing:.25px">UB2405301614397391</div>
<div class="c" style="left:513px;top:993px;letter-spacing:.35px">qqll</div><div class="c" style="left:513px;top:1014px;letter-spacing:.2px">987654321</div>
<div class="c" style="left:682px;top:1004px;letter-spacing:.1px">752.47</div>
<div class="c" style="left:810px;top:1004px;letter-spacing:0px">0.00</div>
<div class="c" style="left:978px;top:1004px;letter-spacing:-.25px">USDT590.00</div>
<div class="c" style="left:1141px;top:1004px">1</div>
<div class="c" style="left:1270px;top:1004px;letter-spacing:-.3px">USDT590</div>
<div class="c" style="left:1422px;top:1004px;letter-spacing:-.35px">USDT3.54</div>
<div class="c" style="left:1562px;top:993px;letter-spacing:.2px">2024<b>年</b>05<b>月</b>30<b>日</b> 16:14:39</div><div class="c" style="left:1562px;top:1014px;letter-spacing:.2px">2024<b>年</b>05<b>月</b>30<b>日</b> 16:14:43</div>
<div class="c" style="left:1848px;top:1004px;letter-spacing:.15px">2024<b>年</b>05<b>月</b>30<b>日</b> 17:14:39</div>
<div class="bx" style="left:2134px;top:1002px;width:46px">已付款</div>
<div class="c" style="left:2262px;top:1004px"><b>完成付款</b></div>
<div class="bx" style="left:2391px;top:1002px;width:58px">资金流水</div>
<div class="rl" style="top:1101px"></div>
<div class="c" style="left:251px;top:1063px;letter-spacing:.25px">UB2405301614333125</div>
<div class="c" style="left:513px;top:1052px;letter-spacing:.35px">qqll</div><div class="c" style="left:513px;top:1073px;letter-spacing:.2px">987654321</div>
<div class="c" style="left:682px;top:1063px;letter-spacing:.1px">748.57</div>
<div class="c" style="left:810px;top:1063px;letter-spacing:0px">0.00</div>
<div class="c" style="left:978px;top:1063px;letter-spacing:-.25px">USDT650.00</div>
<div class="c" style="left:1141px;top:1063px">1</div>
<div class="c" style="left:1270px;top:1063px;letter-spacing:-.3px">USDT650</div>
<div class="c" style="left:1422px;top:1063px;letter-spacing:-.35px">USDT3.90</div>
<div class="c" style="left:1562px;top:1052px;letter-spacing:.2px">2024<b>年</b>05<b>月</b>30<b>日</b> 16:14:33</div><div class="c" style="left:1562px;top:1073px;letter-spacing:.2px">2024<b>年</b>05<b>月</b>30<b>日</b> 16:14:37</div>
<div class="c" style="left:1848px;top:1063px;letter-spacing:.15px">2024<b>年</b>05<b>月</b>30<b>日</b> 17:14:33</div>
<div class="bx" style="left:2134px;top:1061px;width:46px">已付款</div>
<div class="c" style="left:2262px;top:1063px"><b>完成付款</b></div>
<div class="bx" style="left:2391px;top:1061px;width:58px">资金流水</div>
<div class="rl" style="top:1160px"></div>
<div class="c" style="left:251px;top:1122px;letter-spacing:.25px">UB2405301614265388</div>
<div class="c" style="left:513px;top:1111px;letter-spacing:.35px">qqll</div><div class="c" style="left:513px;top:1132px;letter-spacing:.2px">987654321</div>
<div class="c" style="left:682px;top:1122px;letter-spacing:.1px">745.09</div>
<div class="c" style="left:810px;top:1122px;letter-spacing:0px">0.00</div>
<div class="c" style="left:978px;top:1122px;letter-spacing:-.25px">USDT580.00</div>
<div class="c" style="left:1141px;top:1122px">1</div>
<div class="c" style="left:1270px;top:1122px;letter-spacing:-.3px">USDT580</div>
<div class="c" style="left:1422px;top:1122px;letter-spacing:-.35px">USDT3.48</div>
<div class="c" style="left:1562px;top:1111px;letter-spacing:.2px">2024<b>年</b>05<b>月</b>30<b>日</b> 16:14:26</div><div class="c" style="left:1562px;top:1132px;letter-spacing:.2px">2024<b>年</b>05<b>月</b>30<b>日</b> 16:14:31</div>
<div class="c" style="left:1848px;top:1122px;letter-spacing:.15px">2024<b>年</b>05<b>月</b>30<b>日</b> 17:14:26</div>
<div class="bx" style="left:2134px;top:1120px;width:46px">已付款</div>
<div class="c" style="left:2262px;top:1122px"><b>完成付款</b></div>
<div class="bx" style="left:2391px;top:1120px;width:58px">资金流水</div>
<div class="rl" style="top:1219px"></div>
<div class="c" style="left:251px;top:1181px;letter-spacing:.25px">UB2405301614193465</div>
<div class="c" style="left:513px;top:1170px;letter-spacing:.35px">qqll</div><div class="c" style="left:513px;top:1191px;letter-spacing:.2px">987654321</div>
<div class="c" style="left:682px;top:1181px;letter-spacing:.1px">741.79</div>
<div class="c" style="left:810px;top:1181px;letter-spacing:0px">0.00</div>
<div class="c" style="left:978px;top:1181px;letter-spacing:-.25px">USDT550.00</div>
<div class="c" style="left:1141px;top:1181px">1</div>
<div class="c" style="left:1270px;top:1181px;letter-spacing:-.3px">USDT550</div>
<div class="c" style="left:1422px;top:1181px;letter-spacing:-.35px">USDT3.30</div>
<div class="c" style="left:1562px;top:1170px;letter-spacing:.2px">2024<b>年</b>05<b>月</b>30<b>日</b> 16:14:19</div><div class="c" style="left:1562px;top:1191px;letter-spacing:.2px">2024<b>年</b>05<b>月</b>30<b>日</b> 16:14:24</div>
<div class="c" style="left:1848px;top:1181px;letter-spacing:.15px">2024<b>年</b>05<b>月</b>30<b>日</b> 17:14:19</div>
<div class="bx" style="left:2134px;top:1179px;width:46px">已付款</div>
<div class="c" style="left:2262px;top:1181px"><b>完成付款</b></div>
<div class="bx" style="left:2391px;top:1179px;width:58px">资金流水</div>
<div class="rl" style="top:1278px"></div>
<div class="c" style="left:251px;top:1240px;letter-spacing:.25px">UB2405301444146631</div>
<div class="c" style="left:513px;top:1229px;letter-spacing:.35px">Qq</div><div class="c" style="left:513px;top:1250px;letter-spacing:.2px">987654321</div>
<div class="c" style="left:682px;top:1240px;letter-spacing:.1px">738.29</div>
<div class="c" style="left:810px;top:1240px;letter-spacing:0px">0.00</div>
<div class="c" style="left:978px;top:1240px;letter-spacing:-.25px">USDT500.00</div>
<div class="c" style="left:1141px;top:1240px">1</div>
<div class="c" style="left:1270px;top:1240px;letter-spacing:-.3px">USDT500</div>
<div class="c" style="left:1422px;top:1240px;letter-spacing:-.35px">USDT3.00</div>
<div class="c" style="left:1562px;top:1229px;letter-spacing:.2px">2024<b>年</b>05<b>月</b>30<b>日</b> 14:44:14</div><div class="c" style="left:1562px;top:1250px;letter-spacing:.2px">2024<b>年</b>05<b>月</b>30<b>日</b> 14:44:20</div>
<div class="c" style="left:1848px;top:1240px;letter-spacing:.15px">2024<b>年</b>05<b>月</b>30<b>日</b> 15:44:14</div>
<div class="bx" style="left:2134px;top:1238px;width:46px">已付款</div>
<div class="c" style="left:2262px;top:1240px"><b>完成付款</b></div>
<div class="bx" style="left:2391px;top:1238px;width:58px">资金流水</div>
<svg style="position:absolute;left:1130px;top:472px" width="300" height="300" viewBox="0 0 300 300"><circle cx="150" cy="150" r="139.2" fill="none" stroke="#f00" stroke-width="5.6"/><text transform="translate(150 150) rotate(-102.00) translate(0 -106) scale(0.72 1)" text-anchor="middle" font-family="Liberation Sans" font-size="27" fill="#f00" stroke="#f00" stroke-width="1.3">w</text><text transform="translate(150 150) rotate(-85.89) translate(0 -106) scale(0.72 1)" text-anchor="middle" font-family="Liberation Sans" font-size="27" fill="#f00" stroke="#f00" stroke-width="1.3">w</text><text transform="translate(150 150) rotate(-69.78) translate(0 -106) scale(0.72 1)" text-anchor="middle" font-family="Liberation Sans" font-size="27" fill="#f00" stroke="#f00" stroke-width="1.3">w</text><text transform="translate(150 150) rotate(-53.67) translate(0 -106) scale(1.0 1)" text-anchor="middle" font-family="Liberation Sans" font-size="27" fill="#f00" stroke="#f00" stroke-width="0.6">.</text><text transform="translate(150 150) rotate(-37.57) translate(0 -106) scale(1.0 1)" text-anchor="middle" font-family="Liberation Sans" font-size="27" fill="#f00" stroke="#f00" stroke-width="0.6">5</text><text transform="translate(150 150) rotate(-21.46) translate(0 -106) scale(1.0 1)" text-anchor="middle" font-family="Liberation Sans" font-size="27" fill="#f00" stroke="#f00" stroke-width="0.6">1</text><text transform="translate(150 150) rotate(-5.35) translate(0 -106) scale(1.0 1)" text-anchor="middle" font-family="Liberation Sans" font-size="27" fill="#f00" stroke="#f00" stroke-width="0.6">5</text><text transform="translate(150 150) rotate(10.76) translate(0 -106) scale(1.0 1)" text-anchor="middle" font-family="Liberation Sans" font-size="27" fill="#f00" stroke="#f00" stroke-width="0.6">y</text><text transform="translate(150 150) rotate(26.87) translate(0 -106) scale(0.74 1)" text-anchor="middle" font-family="Liberation Sans" font-size="27" fill="#f00" stroke="#f00" stroke-width="1.2">m</text><text transform="translate(150 150) rotate(42.97) translate(0 -106) scale(1.0 1)" text-anchor="middle" font-family="Liberation Sans" font-size="27" fill="#f00" stroke="#f00" stroke-width="0.6">.</text><text transform="translate(150 150) rotate(59.08) translate(0 -106) scale(1.0 1)" text-anchor="middle" font-family="Liberation Sans" font-size="27" fill="#f00" stroke="#f00" stroke-width="0.6">c</text><text transform="translate(150 150) rotate(75.19) translate(0 -106) scale(1.0 1)" text-anchor="middle" font-family="Liberation Sans" font-size="27" fill="#f00" stroke="#f00" stroke-width="0.6">o</text><text transform="translate(150 150) rotate(91.30) translate(0 -106) scale(0.74 1)" text-anchor="middle" font-family="Liberation Sans" font-size="27" fill="#f00" stroke="#f00" stroke-width="1.2">m</text><text transform="translate(150 150) rotate(27.30) translate(0 130.5)" text-anchor="middle" font-family="Liberation Sans" font-style="italic" font-size="14.5" fill="#f00">5</text><text transform="translate(150 150) rotate(20.71) translate(0 130.5)" text-anchor="middle" font-family="Liberation Sans" font-style="italic" font-size="14.5" fill="#f00">1</text><text transform="translate(150 150) rotate(14.12) translate(0 130.5)" text-anchor="middle" font-family="Liberation Sans" font-style="italic" font-size="14.5" fill="#f00">5</text><text transform="translate(150 150) rotate(7.54) translate(0 130.5)" text-anchor="middle" font-family="Liberation Sans" font-style="italic" font-size="14.5" fill="#f00">y</text><text transform="translate(150 150) rotate(0.95) translate(0 130.5)" text-anchor="middle" font-family="Liberation Sans" font-style="italic" font-size="14.5" fill="#f00">m</text><text transform="translate(150 150) rotate(-5.64) translate(0 130.5)" text-anchor="middle" font-family="Liberation Sans" font-style="italic" font-size="14.5" fill="#f00">.</text><text transform="translate(150 150) rotate(-12.23) translate(0 130.5)" text-anchor="middle" font-family="Liberation Sans" font-style="italic" font-size="14.5" fill="#f00">c</text><text transform="translate(150 150) rotate(-18.81) translate(0 130.5)" text-anchor="middle" font-family="Liberation Sans" font-style="italic" font-size="14.5" fill="#f00">o</text><text transform="translate(150 150) rotate(-25.40) translate(0 130.5)" text-anchor="middle" font-family="Liberation Sans" font-style="italic" font-size="14.5" fill="#f00">m</text><text x="77" y="163.5" font-family="Liberation Sans" font-size="38" fill="#f00">515</text><text x="146" y="162" font-family="Liberation Serif" font-size="38" fill="#f00">源码</text><text x="76.6" y="230" font-family="Liberation Sans" font-weight="bold" font-size="27.5" fill="#f00" textLength="91.5" lengthAdjust="spacingAndGlyphs">515ym.</text><text x="177.5" y="230" font-family="Liberation Sans" font-weight="bold" font-size="27.5" fill="#f00" textLength="50.5" lengthAdjust="spacingAndGlyphs">com</text></svg>
</body></html>
